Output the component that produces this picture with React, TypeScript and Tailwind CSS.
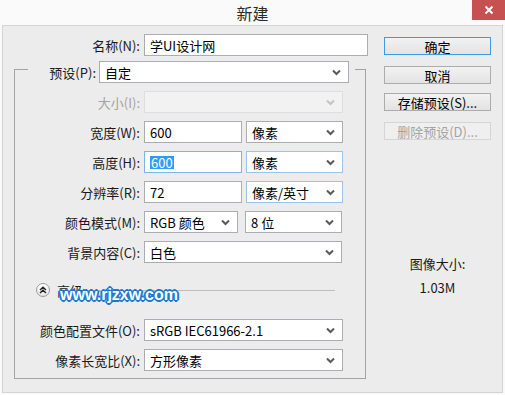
import type { ReactNode } from "react";

const font = { fontFamily: '"Noto Sans CJK SC", "Noto Sans", sans-serif' };

function Chevron({ disabled }: { disabled?: boolean }) {
  return (
    <svg width="9" height="7" viewBox="0 0 9 7" className="shrink-0">
      <polyline
        points="1,1.5 4.5,5 8,1.5"
        fill="none"
        stroke={disabled ? "#c4c4c4" : "#5a5a5a"}
        strokeWidth="2"
      />
    </svg>
  );
}

function Field({
  value,
  w,
  focus,
  selected,
}: {
  value: string;
  w: string;
  focus?: boolean;
  selected?: boolean;
}) {
  return (
    <div
      className={`${w} flex h-[22px] items-center border bg-white pl-[5px] text-[13px] text-black ${
        focus ? "border-[#7eb4ea]" : "border-[#abadb3]"
      }`}
    >
      {selected ? <span className="bg-[#3399ff] px-[1px] text-white">{value}</span> : value}
    </div>
  );
}

function Select({
  value,
  w,
  disabled,
  focus,
  className = "",
}: {
  value: string;
  w: string;
  disabled?: boolean;
  focus?: boolean;
  className?: string;
}) {
  return (
    <div
      className={`${w} flex h-[22px] items-center justify-between border pl-[5px] pr-[7px] text-[13px] ${
        disabled
          ? "border-[#dedede] bg-[#f2f2f2]"
          : focus
            ? "border-[#9fc3e8] bg-white text-black"
            : "border-[#abadb3] bg-white text-black"
      } ${className}`}
    >
      <span>{value}</span>
      <Chevron disabled={disabled} />
    </div>
  );
}

function Row({
  label,
  disabled,
  children,
}: {
  label: string;
  disabled?: boolean;
  children: ReactNode;
}) {
  return (
    <div className="flex h-[22px] items-center gap-[4px]">
      <div
        className={`w-[125px] text-right text-[13px] ${disabled ? "text-[#a3a3a3]" : "text-[#1a1a1a]"}`}
      >
        {label}
      </div>
      {children}
    </div>
  );
}

function Button({ label, className = "", primary, disabled }: {
  label: string;
  className?: string;
  primary?: boolean;
  disabled?: boolean;
}) {
  return (
    <div
      className={`flex h-[18px] w-[107px] items-center justify-center border text-[13px] ${
        disabled
          ? "border-[#d5d5d5] bg-[#efefef] text-[#a3a3a3]"
          : primary
            ? "border-[#3c9be8] bg-gradient-to-b from-[#f2f2f2] to-[#e3e3e3] text-black"
            : "border-[#acacac] bg-gradient-to-b from-[#f2f2f2] to-[#e3e3e3] text-black"
      } ${className}`}
    >
      {label}
    </div>
  );
}

export default function App() {
  return (
    <div className="h-[395px] w-[505px] overflow-hidden bg-[#fafafa] leading-none" style={font}>
      {/* title bar */}
      <div className="relative flex h-[25px] items-center justify-center">
        <span className="text-[16px] text-[#2b2b2b]">新建</span>
        <div className="absolute right-0 top-0 flex h-[20px] w-[33px] items-center justify-center bg-[#c75050]">
          <svg width="10" height="10" viewBox="0 0 10 10">
            <path d="M1.5 1.5 L8.5 8.5 M8.5 1.5 L1.5 8.5" stroke="#fff" strokeWidth="2" />
          </svg>
        </div>
      </div>

      {/* body */}
      <div className="mx-[2px] flex h-[368px] border border-[#d4d4d4] bg-[#ececec]">
        {/* left */}
        <div className="w-[365px]">
          <div className="mt-[8px] flex h-[22px] items-center gap-[4px]">
            <div className="w-[137px] text-right text-[13px] text-[#1a1a1a]">名称(N):</div>
            <Field value="学UI设计网" w="w-[224px]" />
          </div>

          <div className="ml-[11px] mt-[13px] h-[310px] w-[352px] border border-[#a3a3a3]">
            <div className="-mt-[9px] ml-[13px] flex w-[327px] items-center gap-[3px] bg-[#ececec]">
              <div className="w-[68px] text-right text-[13px] text-[#1a1a1a]">预设(P):</div>
              <Select value="自定" w="w-[250px]" />
            </div>

            <div className="mt-[8px] flex flex-col gap-[8px]">
              <Row label="大小(I):" disabled>
                <Select value="" w="w-[199px]" disabled />
              </Row>
              <Row label="宽度(W):">
                <Field value="600" w="w-[98px]" />
                <Select value="像素" w="w-[97px]" />
              </Row>
              <Row label="高度(H):">
                <Field value="600" w="w-[98px]" focus selected />
                <Select value="像素" w="w-[97px]" focus />
              </Row>
              <Row label="分辨率(R):">
                <Field value="72" w="w-[98px]" />
                <Select value="像素/英寸" w="w-[97px]" focus />
              </Row>
              <Row label="颜色模式(M):">
                <Select value="RGB 颜色" w="w-[94px]" />
                <Select value="8 位" w="w-[97px]" className="ml-[3px]" />
              </Row>
              <Row label="背景内容(C):">
                <Select value="白色" w="w-[198px]" />
              </Row>
            </div>

            {/* advanced */}
            <div className="relative mt-[20px] flex h-[14px] items-center">
              <div className="ml-[21px] flex h-[14px] w-[14px] items-center justify-center rounded-full border border-[#9a9a9a] bg-gradient-to-b from-white to-[#e6e6e6]">
                <svg width="8" height="8" viewBox="0 0 8 8">
                  <path d="M1 4 L4 1.2 L7 4 M1 7 L4 4.2 L7 7" fill="none" stroke="#222" strokeWidth="1.4" />
                </svg>
              </div>
              <span className="ml-[7px] text-[13px] text-[#1a1a1a]">高级</span>
              <div className="ml-[2px] h-px w-[250px] bg-[#bdbdbd]" />
              <span className="absolute left-[45px] top-[4px] text-[16px] font-bold text-white [font-family:'Liberation_Sans',Arial,sans-serif] [text-shadow:-1px_-1px_0_#1c7ad3,1px_-1px_0_#1c7ad3,-1px_1px_0_#1c7ad3,1px_1px_0_#1c7ad3,0_2px_0_#1c7ad3,2px_0_0_#1c7ad3,-2px_0_0_#1c7ad3,0_-2px_0_#1c7ad3]">
                www.rjzxw.com
              </span>
            </div>

            <div className="mt-[22px] flex flex-col gap-[8px]">
              <Row label="颜色配置文件(O):">
                <Select value="sRGB IEC61966-2.1" w="w-[199px]" />
              </Row>
              <Row label="像素长宽比(X):">
                <Select value="方形像素" w="w-[199px]" />
              </Row>
            </div>
          </div>
        </div>

        {/* right */}
        <div className="ml-[16px] flex w-[107px] flex-col">
          <Button label="确定" primary className="mt-[11px]" />
          <Button label="取消" className="mt-[11px]" />
          <Button label="存储预设(S)..." className="mt-[9px]" />
          <Button label="删除预设(D)..." disabled className="mt-[11px]" />
          <div className="mt-[117px] text-center text-[13px] text-[#1a1a1a]">图像大小:</div>
          <div className="mt-[11px] text-center text-[13px] text-[#1a1a1a]">1.03M</div>
        </div>
      </div>
    </div>
  );
}
